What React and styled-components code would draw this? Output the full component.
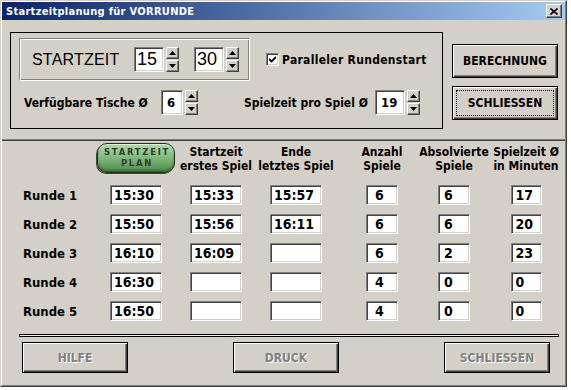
import React from 'react';
import styled, { createGlobalStyle } from 'styled-components';

const UI = `"DejaVu Sans Condensed", "DejaVu Sans", "Liberation Sans", sans-serif`;
const ARIAL = `"Liberation Sans", Arial, sans-serif`;

const Global = createGlobalStyle`
  html, body { margin: 0; padding: 0; background: #ffffff; }
  body { font-family: ${UI}; font-stretch: condensed; }
  * { box-sizing: border-box; }
`;

const Window = styled.div`
  width: 567px;
  height: 387px;
  background: #d4d0c8;
  border: 1px solid;
  border-color: #d4d0c8 #404040 #404040 #d4d0c8;
  display: flex;
  flex-direction: column;
  overflow: hidden;
`;

const Frame = styled.div`
  flex: 1;
  display: flex;
  flex-direction: column;
  border: 1px solid;
  border-color: #ffffff #808080 #808080 #ffffff;
`;

const TitleBar = styled.div`
  height: 18px;
  flex: none;
  display: flex;
  align-items: center;
  justify-content: space-between;
  padding: 0 3px 0 4px;
  background: linear-gradient(to right, #0a246a, #a6caf0);
  color: #ffffff;
  font: bold 11px ${UI};
  font-stretch: condensed;
  letter-spacing: 0.3px;
`;

const Raised = `
  background: #d4d0c8;
  border: 1px solid;
  border-color: #ffffff #404040 #404040 #ffffff;
  box-shadow: inset -1px -1px #808080;
`;

const CloseBtn = styled.div`
  ${Raised}
  width: 16px;
  height: 14px;
  display: flex;
  align-items: center;
  justify-content: center;
`;

const Body = styled.div`
  flex: 1;
  display: flex;
  flex-direction: column;
`;

const TopArea = styled.div`
  display: flex;
  align-items: flex-start;
  gap: 9px;
  padding: 12px 0 0 8px;
`;

const GroupBox = styled.div`
  width: 433px;
  height: 97px;
  border: 1px solid #000000;
  padding: 5px 0 0 8px;
  display: flex;
  flex-direction: column;
`;

const GroupRow = styled.div`
  display: flex;
  align-items: center;
  gap: ${(p) => p.$gap || 0}px;
  margin-top: ${(p) => p.$top || 0}px;
`;

const Etched = styled.div`
  width: 231px;
  height: 43px;
  border: 1px solid;
  border-color: #808080 #ffffff #ffffff #808080;
  box-shadow: inset 1px 1px #ffffff, inset -1px -1px #808080;
  display: flex;
  align-items: center;
  padding-left: 12px;
`;

const BigLabel = styled.span`
  font: 16px ${ARIAL};
  color: #000;
  width: 102px;
  letter-spacing: 0.2px;
`;

const SpinWrap = styled.div`
  display: flex;
  align-items: center;
  gap: 2px;
  margin-left: ${(p) => p.$ml || 0}px;
`;

const SpinField = styled.div`
  width: ${(p) => p.$w}px;
  height: 25px;
  background: #ffffff;
  border: 1px solid;
  border-color: #808080 #ffffff #ffffff #808080;
  box-shadow: inset 1px 1px #404040, inset -1px -1px #d4d0c8;
  display: flex;
  align-items: center;
  padding-left: ${(p) => (p.$big ? 2 : 5)}px;
  font: ${(p) => (p.$big ? `18px ${ARIAL}` : `bold 13px ${UI}`)};
  font-stretch: condensed;
  color: #000;
`;

const SpinButtons = styled.div`
  display: flex;
  flex-direction: column;
  gap: 1px;
`;

const ArrowBtn = styled.div`
  ${Raised}
  width: 13px;
  height: 12px;
  display: flex;
  align-items: center;
  justify-content: center;
`;

const Label = styled.span`
  font: bold 12px ${UI};
  font-stretch: condensed;
  color: #000;
  width: ${(p) => (p.$w ? `${p.$w}px` : 'auto')};
  margin-left: ${(p) => p.$ml || 0}px;
  letter-spacing: ${(p) => p.$ls || 0}px;
  white-space: nowrap;
`;

const CheckRow = styled.label`
  display: flex;
  align-items: center;
  gap: 3px;
`;

const CheckBox = styled.span`
  width: 13px;
  height: 13px;
  background: #ffffff;
  border: 1px solid;
  border-color: #808080 #ffffff #ffffff #808080;
  box-shadow: inset 1px 1px #404040, inset -1px -1px #d4d0c8;
  display: flex;
  align-items: center;
  justify-content: center;
`;

const ButtonCol = styled.div`
  display: flex;
  flex-direction: column;
  gap: 8px;
  margin-top: 12px;
`;

const WinButton = styled.div`
  width: 106px;
  height: ${(p) => p.$h || 34}px;
  background: #d4d0c8;
  border: 1px solid #000000;
  box-shadow: inset 1px 1px #ffffff, inset -1px -1px #404040, inset -2px -2px #808080;
  display: flex;
  align-items: center;
  justify-content: center;
  font: bold 12px ${UI};
  font-stretch: condensed;
  color: ${(p) => (p.$disabled ? '#808080' : '#000000')};
  text-shadow: ${(p) => (p.$disabled ? '1px 1px 0 #ffffff' : 'none')};
  padding: 3px;
`;

const Focus = styled.span`
  flex: 1;
  align-self: stretch;
  display: flex;
  align-items: center;
  justify-content: center;
  border: 1px dotted #000000;
`;

const Separator = styled.div`
  height: 2px;
  margin-top: 10px;
  border-top: 1px solid #808080;
  border-bottom: 1px solid #404040;
`;

const Table = styled.div`
  display: flex;
  flex-direction: column;
  gap: 9px;
  padding: 2px 0 0 18px;
`;

const Row = styled.div`
  display: flex;
  align-items: ${(p) => (p.$head ? 'flex-start' : 'center')};
  height: ${(p) => (p.$head ? 30 : 20)}px;
  margin-bottom: ${(p) => (p.$head ? 3 : 0)}px;
`;

const RowLabel = styled.div`
  width: 76px;
  padding-left: 3px;
  font: bold 13px ${UI};
  font-stretch: condensed;
  color: #000;
`;

const Group = styled.div`
  display: flex;
  margin-left: ${(p) => p.$ml || 0}px;
`;

const Cell = styled.div`
  width: ${(p) => p.$w}px;
  display: flex;
  justify-content: center;
`;

const Head = styled.div`
  font: bold 12px ${UI};
  font-stretch: condensed;
  line-height: 14px;
  text-align: center;
  white-space: nowrap;
  padding-top: 2px;
  color: #000;
`;

const Field = styled.div`
  width: ${(p) => p.$w}px;
  height: 20px;
  background: #ffffff;
  border: 1px solid;
  border-color: #808080 #ffffff #ffffff #808080;
  box-shadow: inset 1px 1px #404040, inset -1px -1px #d4d0c8;
  display: flex;
  align-items: center;
  padding-left: ${(p) => p.$pad}px;
  font: bold 14px ${UI};
  font-stretch: condensed;
  color: #000;
`;

const PlanButton = styled.div`
  width: 78px;
  height: 30px;
  border-radius: 10px;
  border: 1px solid #1f2b1c;
  background: linear-gradient(#b1d8ad 0%, #8ec38a 35%, #6aa767 70%, #4d8a4b 100%);
  box-shadow: inset 0 1px 0 rgba(255, 255, 255, 0.6), inset 0 -2px 2px rgba(0, 40, 0, 0.35), -1px 1px 0 #3b4a38;
  display: flex;
  flex-direction: column;
  align-items: center;
  justify-content: center;
  font: bold 8.5px "DejaVu Sans", ${ARIAL};
  font-stretch: normal;
  letter-spacing: 1.7px;
  line-height: 11px;
  color: #2f3d2b;
  padding-left: 2px;
`;

const DoubleLine = styled.div`
  width: 540px;
  height: 3px;
  margin: 13px 0 0 17px;
  background: #f2f2f2;
  border: 1px solid #000000;
  border-left-color: #404040;
  border-right-color: #404040;
`;

const BottomBar = styled.div`
  display: flex;
  justify-content: space-between;
  width: 528px;
  margin: 5px 0 0 20px;
`;

const Up = () => (
  <svg width="7" height="4" viewBox="0 0 7 4"><path d="M3.5 0L7 4H0z" fill="#000" /></svg>
);
const Down = () => (
  <svg width="7" height="4" viewBox="0 0 7 4"><path d="M0 0H7L3.5 4z" fill="#000" /></svg>
);

const Spinner = ({ value, w, big, ml }) => (
  <SpinWrap $ml={ml}>
    <SpinField $w={w} $big={big}>{value}</SpinField>
    <SpinButtons>
      <ArrowBtn><Up /></ArrowBtn>
      <ArrowBtn><Down /></ArrowBtn>
    </SpinButtons>
  </SpinWrap>
);

const rows = [
  ['Runde 1', '15:30', '15:33', '15:57', '6', '6', '17'],
  ['Runde 2', '15:50', '15:56', '16:11', '6', '6', '20'],
  ['Runde 3', '16:10', '16:09', '', '6', '2', '23'],
  ['Runde 4', '16:30', '', '', '4', '0', '0'],
  ['Runde 5', '16:50', '', '', '4', '0', '0'],
];

export default function App() {
  return (
    <>
      <Global />
      <Window>
        <Frame>
          <TitleBar>
            <span>Startzeitplanung für VORRUNDE</span>
            <CloseBtn>
              <svg width="8" height="7" viewBox="0 0 8 7">
                <path d="M0.5 0.5L7.5 6.5M7.5 0.5L0.5 6.5" stroke="#000" strokeWidth="1.6" />
              </svg>
            </CloseBtn>
          </TitleBar>
          <Body>
            <TopArea>
              <GroupBox>
                <GroupRow $gap={16}>
                  <Etched>
                    <BigLabel>STARTZEIT</BigLabel>
                    <Spinner value="15" w={30} big />
                    <Spinner value="30" w={30} big ml={15} />
                  </Etched>
                  <CheckRow>
                    <CheckBox>
                      <svg width="7" height="7" viewBox="0 0 7 7">
                        <path d="M0 3L2.5 5.5L7 1" stroke="#000" strokeWidth="1.8" fill="none" />
                      </svg>
                    </CheckBox>
                    <Label $ls={0.3}>Paralleler Rundenstart</Label>
                  </CheckRow>
                </GroupRow>
                <GroupRow $top={9}>
                  <Label $w={137} $ml={5}>Verfügbare Tische Ø</Label>
                  <Spinner value="6" w={22} />
                  <Label $w={131} $ml={46}>Spielzeit pro Spiel Ø</Label>
                  <Spinner value="19" w={30} />
                </GroupRow>
              </GroupBox>
              <ButtonCol>
                <WinButton>BERECHNUNG</WinButton>
                <WinButton $h={34}><Focus>SCHLIESSEN</Focus></WinButton>
              </ButtonCol>
            </TopArea>
            <Separator />
            <Table>
              <Row $head>
                <RowLabel />
                <Group>
                  <Cell $w={80}><PlanButton><span>STARTZEIT</span><span>PLAN</span></PlanButton></Cell>
                  <Cell $w={80}><Head>Startzeit<br />erstes Spiel</Head></Cell>
                  <Cell $w={80}><Head>Ende<br />letztes Spiel</Head></Cell>
                </Group>
                <Group $ml={10}>
                  <Cell $w={72}><Head>Anzahl<br />Spiele</Head></Cell>
                  <Cell $w={72}><Head>Absolvierte<br />Spiele</Head></Cell>
                  <Cell $w={72}><Head>Spielzeit Ø<br />in Minuten</Head></Cell>
                </Group>
              </Row>
              {rows.map((r) => (
                <Row key={r[0]}>
                  <RowLabel>{r[0]}</RowLabel>
                  <Group>
                    <Cell $w={80}><Field $w={52} $pad={3}>{r[1]}</Field></Cell>
                    <Cell $w={80}><Field $w={52} $pad={3}>{r[2]}</Field></Cell>
                    <Cell $w={80}><Field $w={52} $pad={3}>{r[3]}</Field></Cell>
                  </Group>
                  <Group $ml={10}>
                    <Cell $w={72}><Field $w={32} $pad={8}>{r[4]}</Field></Cell>
                    <Cell $w={72}><Field $w={32} $pad={5}>{r[5]}</Field></Cell>
                    <Cell $w={72}><Field $w={31} $pad={4}>{r[6]}</Field></Cell>
                  </Group>
                </Row>
              ))}
            </Table>
            <DoubleLine />
            <BottomBar>
              <WinButton $h={31} $disabled>HILFE</WinButton>
              <WinButton $h={31} $disabled>DRUCK</WinButton>
              <WinButton $h={31} $disabled>SCHLIESSEN</WinButton>
            </BottomBar>
          </Body>
        </Frame>
      </Window>
    </>
  );
}
